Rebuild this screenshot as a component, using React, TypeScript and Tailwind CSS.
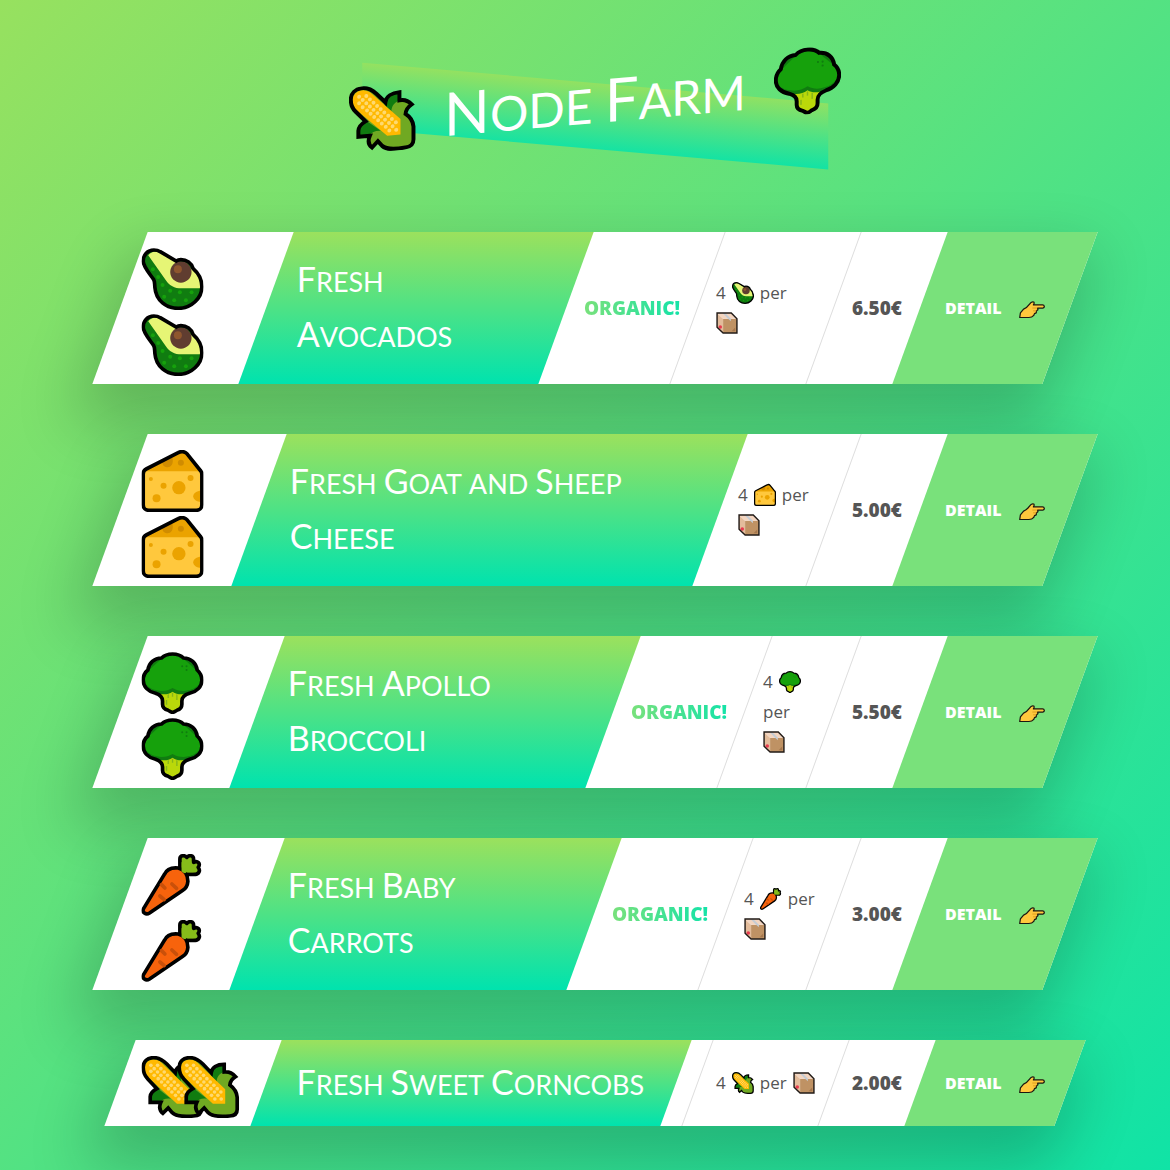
import type { ReactNode } from 'react';

type IconProps = { className?: string };

function Corn({ className }: IconProps) {
  const kernels = [
    [28, 28], [48, 28], [38, 38], [58, 38], [28, 46], [48, 48], [68, 48], [38, 58], [58, 58], [78, 58],
    [50, 68], [68, 68], [88, 68], [60, 78], [79, 78], [98, 78], [70, 88], [89, 88], [109, 88], [81, 98],
    [100, 98], [119, 98], [91, 108], [111, 108], [130, 108], [102, 118], [121, 118], [112, 129], [131, 129],
  ];
  const outline =
    'M34 5C50 4 66 14 76 24L101 50C103 34 118 25 140 25V48C155 46 165 52 174 62C164 68 158 76 157 87C172 98 178 110 179 124V160C179 174 170 180 156 180C125 183 105 182 92 170L80 156L64 172C52 162 52 152 58 139H26V122C27 110 36 103 46 98L18 68C8 58 5 48 5 34C5 16 18 6 34 5Z';
  return (
    <svg viewBox="0 0 186 186" className={className} role="img" aria-label="corn">
      <path d={outline} fill="#70A922" />
      <path d="M98 58C104 38 118 28 140 27V48C122 52 116 68 118 82ZM28 138V122C30 108 38 100 50 98L88 128C72 126 62 130 58 138Z" fill="#107C10" />
      <path d="M14 22C24 7 46 8 60 20L143 100V143H106L18 62C8 50 6 34 14 22Z" fill="#FFB900" />
      {kernels.map(([x, y]) => (
        <circle key={`${x}-${y}`} cx={x} cy={y} r="5.5" fill="#FFD96E" />
      ))}
      <path d={outline} fill="none" stroke="#000" strokeWidth="11" />
    </svg>
  );
}

function Broccoli({ className }: IconProps) {
  const outline =
    'M93 6C80 6 68 10 60 18C38 18 22 33 19 54C9 62 5 72 5 84C5 104 20 119 42 124C54 128 63 136 63 147V157C63 170 72 173 80 175C85 177 87 181 93 181C99 181 101 177 106 175C114 173 121 170 121 157V147C121 136 131 128 144 124C166 119 181 104 181 84C181 72 176 62 167 54C164 33 148 18 126 18C118 10 106 6 93 6Z';
  return (
    <svg viewBox="0 0 186 186" className={className} role="img" aria-label="broccoli">
      <path d={outline} fill="#107C10" />
      <path d="M93 8L60 20L20 56L7 84C10 98 26 112 46 115C62 120 80 116 93 108C106 116 124 120 140 115C160 112 176 98 179 84L166 56L126 20Z" fill="#16A10C" />
      <path d="M58 126C72 128 82 126 93 119C104 126 114 128 128 126L121 145V160L108 174L93 180L78 174L63 160V145Z" fill="#BAD80A" />
      <path d="M80 127V138M93 122V134M106 127V144M75 144V158" stroke="#86B51B" strokeWidth="4" />
      <circle cx="122" cy="43" r="3" fill="#107C10" />
      <circle cx="135" cy="43" r="3" fill="#107C10" />
      <circle cx="135" cy="54" r="3" fill="#107C10" />
      <path d={outline} fill="none" stroke="#000" strokeWidth="11" />
    </svg>
  );
}

function Avocado({ className }: IconProps) {
  const outline =
    'M37 6C18 6 5 20 5 40C5 55 20 72 36 94C40 100 39 108 40 118C43 158 75 181 110 181C150 181 181 150 181 116C181 92 170 75 155 62C150 45 135 35 118 35C112 35 107 37 104 39L56 11C50 7 44 6 37 6Z';
  const dots = [[34, 64], [50, 87], [63, 111], [86, 128], [115, 133], [150, 133], [68, 146], [98, 157], [133, 157]];
  return (
    <svg viewBox="0 0 186 186" className={className} role="img" aria-label="avocado">
      <path d={outline} fill="#107C10" />
      <path d="M20 22C28 9 45 8 54 13L104 42L155 65C169 78 177 98 177 121H120C98 121 84 112 74 98Z" fill="#E6F575" />
      <circle cx="118" cy="72" r="32" fill="#603D30" />
      <circle cx="109" cy="64" r="12" fill="#8E562E" />
      {dots.map(([x, y]) => (
        <circle key={`${x}-${y}`} cx={x} cy={y} r="6" fill="#16A10C" />
      ))}
      <path d={outline} fill="none" stroke="#000" strokeWidth="11" />
    </svg>
  );
}

function Cheese({ className }: IconProps) {
  const outline =
    'M5 72C5 65 8 60 14 57L110 8C118 3 130 4 136 11L177 62C180 65 181 68 181 74V164C181 174 174 181 164 181H22C12 181 5 174 5 164Z';
  return (
    <svg viewBox="0 0 186 186" className={className} role="img" aria-label="cheese">
      <path d={outline} fill="#FFC83D" />
      <path d="M6 64L14 57L110 8C118 3 130 4 136 11L179 64Z" fill="#EBA300" />
      <path d="M62 36L92 22C98 42 88 52 78 52C70 52 62 46 62 36Z" fill="#D08C00" />
      <circle cx="118" cy="38" r="9" fill="#D08C00" />
      <g fill="#EBA300">
        <circle cx="28" cy="87" r="6" />
        <circle cx="66" cy="107" r="9" />
        <circle cx="147" cy="84" r="9" />
        <circle cx="112" cy="113" r="20" />
        <circle cx="45" cy="145" r="12" />
        <path d="M180 122C165 122 155 130 155 139C155 148 165 156 180 156Z" />
      </g>
      <path d={outline} fill="none" stroke="#000" strokeWidth="11" />
    </svg>
  );
}

function Carrot({ className }: IconProps) {
  return (
    <svg viewBox="0 0 186 186" className={className} role="img" aria-label="carrot">
      <g stroke="#000" strokeWidth="11" strokeLinejoin="round">
        <path d="M115 52V15C115 4 128 2 136 10C143 2 156 4 156 15V25C168 18 178 29 170 40C178 50 171 62 160 61H128Z" fill="#86BC1A" />
        <path d="M6 164L68 62C75 46 90 40 110 42C128 47 139 62 139 82C138 95 133 103 124 109L24 177C13 184 0 175 6 164Z" fill="#F7630C" />
      </g>
      <path d="M120 52V24L133 34L150 22L148 38L162 42L156 55H134C132 60 126 58 120 52Z" fill="#86BC1A" />
      <path d="M91 90L105 103M60 92L70 102M55 126L68 137" stroke="#C9500A" strokeWidth="11" strokeLinecap="round" />
    </svg>
  );
}

function Box({ className }: IconProps) {
  return (
    <svg viewBox="0 0 62 62" className={className} role="img" aria-label="box">
      <path d="M3 3L20 19V59L3 43Z" fill="#E3BC9B" />
      <path d="M20 19H59V59H20Z" fill="#BF9264" />
      <path d="M3 3H43L59 19H20Z" fill="#F3D5C0" />
      <path d="M18 3H26L42 19V26L34 19Z" fill="#C5CCD3" />
      <path d="M44 54L54 44V54Z" fill="#A5774D" />
      <circle cx="12" cy="42" r="5" fill="#E83A50" />
      <path d="M3 3H43L59 19V59H20L3 43Z" fill="none" stroke="#211A16" strokeWidth="4" />
    </svg>
  );
}

function Hand({ className }: IconProps) {
  return (
    <svg viewBox="0 0 74 50" className={className} role="img" aria-label="pointing right">
      <path d="M2 47L4 34L13 23C19 21 25 16 30 9C33 4 38 1 42 3C44 5 43 8 41 11H67C73 11 74 19 68 20H53L54 25L50 28L49 34L44 36L42 41C38 46 34 47 28 47Z" fill="#FFC83D" stroke="#1B1710" strokeWidth="3.5" strokeLinejoin="round" />
      <path d="M38 20H52M40 28H50" stroke="#D28A10" strokeWidth="2" />
    </svg>
  );
}

type Product = {
  lines: string[];
  Icon: (p: IconProps) => ReactNode;
  price: string;
  organic: boolean;
  emojiWidth: string;
  organicWidth: string;
  quantityWidth: string;
  sideBySide?: boolean;
};

const products: Product[] = [
  { lines: ['Fresh', 'Avocados'], Icon: Avocado, price: '6.50€', organic: true, emojiWidth: 'w-[146px]', organicWidth: 'w-[132px]', quantityWidth: 'w-[136px] pr-[30px]' },
  { lines: ['Fresh Goat and Sheep', 'Cheese'], Icon: Cheese, price: '5.00€', organic: false, emojiWidth: 'w-[139px]', organicWidth: 'hidden', quantityWidth: 'w-[114px] pr-[14px]' },
  { lines: ['Fresh Apollo', 'Broccoli'], Icon: Broccoli, price: '5.50€', organic: true, emojiWidth: 'w-[137px]', organicWidth: 'w-[132px]', quantityWidth: 'w-[89px] pr-[18px]' },
  { lines: ['Fresh Baby', 'Carrots'], Icon: Carrot, price: '3.00€', organic: true, emojiWidth: 'w-[137px]', organicWidth: 'w-[132px]', quantityWidth: 'w-[108px] pr-[14px]' },
  { lines: ['Fresh Sweet Corncobs'], Icon: Corn, price: '2.00€', organic: false, emojiWidth: 'w-[146px]', organicWidth: 'w-[22px]', quantityWidth: 'w-[136px] pr-[14px]', sideBySide: true },
];

function Words({ text, capital }: { text: string; capital: string }) {
  return text.split(' ').map((word, i) => (
    <span key={word}>
      {i > 0 && ' '}
      <span className={`inline-block uppercase ${/^[A-Z]/.test(word) ? capital : ''}`}>{word}</span>
    </span>
  ));
}

function Card({ product }: { product: Product }) {
  const { lines, Icon, price, organic, emojiWidth, organicWidth, quantityWidth, sideBySide } = product;
  return (
    <figure className="flex -skew-x-[20deg] bg-white shadow-[0_30px_60px_10px_rgba(0,0,0,0.2)]">
      <div className={`shrink-0 pt-[14px] pb-[6px] pl-[23px] ${emojiWidth}`}>
        <div className={`flex skew-x-[20deg] ${sideBySide ? '' : 'flex-col'}`}>
          <div className="flex h-[66px] items-center">
            <Icon className="size-[62px] shrink-0" />
          </div>
          <div className={`flex h-[66px] items-center ${sideBySide ? '-ml-[26px]' : ''}`}>
            <Icon className="size-[62px] shrink-0" />
          </div>
        </div>
      </div>
      <div className="flex min-w-0 flex-1 items-center bg-linear-to-b/srgb from-[#9be15d] to-[#00e3ae] px-[30px] pb-1">
        <h2 className="skew-x-[20deg] font-['Lato',sans-serif] text-[27px] leading-[55px] font-normal whitespace-nowrap text-white">
          {lines.map((line) => (
            <span key={line} className="block h-[55px]">
              <Words text={line} capital="first-letter:text-[34px]" />
            </span>
          ))}
        </h2>
      </div>
      <div className={`flex shrink-0 items-center border-r border-[#ddd] ${organicWidth}`}>
        {organic && (
          <h6 className="ml-[18px] skew-x-[20deg] bg-linear-to-r/srgb from-[#79e17b] to-[#14e3a8] bg-clip-text text-[19px] font-extrabold text-transparent uppercase">
            Organic!
          </h6>
        )}
      </div>
      <div className={`flex shrink-0 items-center border-r border-[#ddd] pl-[18px] ${quantityWidth}`}>
        <h6 className="flex skew-x-[20deg] flex-wrap items-center gap-x-[6px] text-[17px] leading-[30px]">
          <span>4</span>
          <Icon className="h-[30px] w-[22px]" />
          <span>per</span>
          <Box className="h-[30px] w-[22px]" />
        </h6>
      </div>
      <div className="flex w-[86px] shrink-0 items-center pl-[18px]">
        <h6 className="skew-x-[20deg] text-[19px] font-extrabold">{price}</h6>
      </div>
      <a href="#" className="flex w-[150px] shrink-0 items-center bg-[#79e17b] pl-[25px] text-white">
        <span className="flex skew-x-[20deg] items-center gap-[18px] text-[16px] font-extrabold uppercase">
          Detail
          <Hand className="mt-1 w-[26px]" />
        </span>
      </a>
    </figure>
  );
}

export default function App() {
  return (
    <div className="min-h-screen overflow-hidden bg-linear-to-br/srgb from-[#97e15f] to-[#10e3a6] pt-[50px] pr-[50px] pb-11 pl-[70px] font-['Open_Sans',sans-serif] text-[#555]">
      <main className="mx-auto max-w-[950px]">
        <header className="relative isolate">
          <div className="absolute top-[33px] left-1/2 -z-10 h-[66px] w-[49%] -translate-x-1/2 skew-y-[5deg] bg-linear-to-b/srgb from-[#9be15d] to-[#00e3ae] opacity-80" />
          <h1 className="flex h-[102px] -skew-y-[5deg] items-center justify-center gap-7 pb-[3px] font-['Lato',sans-serif] text-[48px] leading-none font-normal text-white">
            <Corn className="size-[67px]" />
            <span>
              <Words text="Node Farm" capital="first-letter:text-[60px]" />
            </span>
            <Broccoli className="size-[67px]" />
          </h1>
        </header>
        <div className="mt-20 space-y-[50px]">
          {products.map((product) => (
            <Card key={product.price} product={product} />
          ))}
        </div>
      </main>
    </div>
  );
}
